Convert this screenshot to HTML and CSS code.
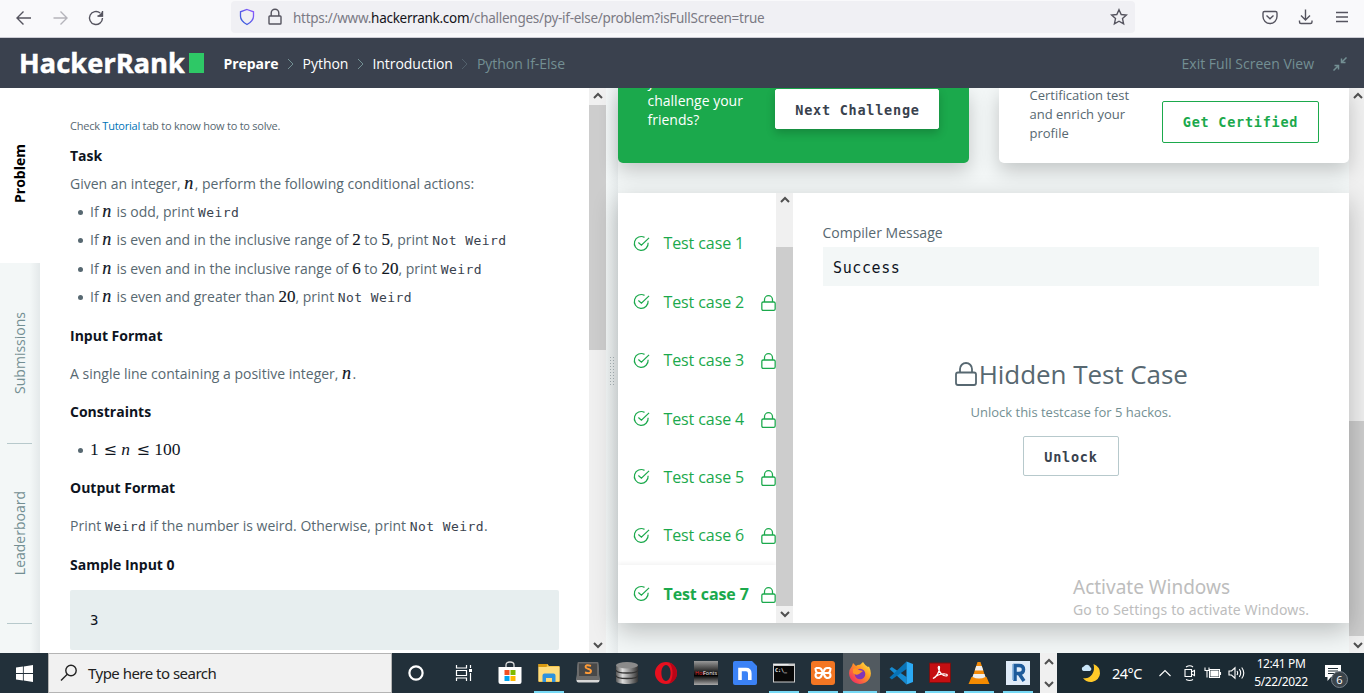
FILE: index.html
```html
<!DOCTYPE html>
<html lang="en">
<head>
<meta charset="utf-8">
<title>Python If-Else | HackerRank</title>
<link rel="stylesheet" href="styles.css">
</head>
<body>
<svg class="defs" aria-hidden="true">
  <symbol id="check" viewBox="0 0 18 18"><path d="M16 8.200A7.300 7.300 0 1 1 12.200 2.500M5.700 8l3.200 2.800L17 3" /></symbol>
  <symbol id="lock" viewBox="0 0 22 24"><path d="M3 10.500h16q2 0 2 2V21q0 2-2 2H3q-2 0-2-2v-8.500q0-2 2-2zM5 10.500V7a6 6 0 0 1 12 0v3.500"/></symbol>
  <symbol id="up" viewBox="0 0 10 8"><path d="M1 6l4-4 4 4"/></symbol>
  <symbol id="down" viewBox="0 0 10 8"><path d="M1 2l4 4 4-4"/></symbol>
  <symbol id="sep" viewBox="0 0 7 12"><path d="M1 1l5 5-5 5"/></symbol>
</svg>

<div class="toolbar">
  <svg class="nav" viewBox="0 0 120 36"><path d="M31 18H17.500M23.500 11.500L17 18l6.500 6.500"/><path class="dim" d="M53.500 18H67M60.500 11.500L67 18l-6.500 6.500"/><path d="M102.500 18a6.500 6.500 0 1 1-2.300-5M102.500 11v5h-5"/><path class="tip" d="M103 11v5.500h-5.500z"/></svg>
  <div class="urlbar">
    <svg class="shield" viewBox="0 0 16 18"><defs><linearGradient id="sg" x1="0" y1="1" x2="1" y2="0"><stop offset="0" stop-color="#2a5bd7"/><stop offset="1" stop-color="#9059ff"/></linearGradient></defs><path d="M8 1.500l6.500 2.300v4.400c0 3.700-3 6.300-6.500 8.300-3.500-2-6.500-4.600-6.500-8.300V3.800z" fill="none" stroke="url(#sg)" stroke-width="1.300"/></svg>
    <svg class="padlock" viewBox="0 0 14 18"><path d="M1.800 8h10.400q.8 0 .8.800v6.400q0 .8-.8.800H1.800q-.8 0-.8-.8V8.800Q1 8 1.800 8zM3.200 8V5a3.800 3.800 0 0 1 7.600 0v3"/></svg>
    <span class="url">https://www.<b>hackerrank.com</b>/challenges/py-if-else/problem?isFullScreen=true</span>
    <svg class="star" viewBox="0 0 18 18"><path d="M9 1.700l2.200 4.800 5.200.6-3.900 3.500 1.100 5.200L9 13.200l-4.600 2.600 1.100-5.200L1.600 7.100l5.200-.6z"/></svg>
  </div>
  <svg class="tools" viewBox="0 0 100 36"><path d="M13.500 11.500h11q1.500 0 1.500 1.500v3.500a7 7 0 0 1-14 0V13q0-1.500 1.500-1.500zM15.500 15.500l3.500 3.200 3.500-3.200M54.500 9.500v10.500M50 15.500l4.500 4.500 4.500-4.500M48.500 20.500v1.500q0 1.500 1.500 1.500h9.500q1.500 0 1.500-1.500v-1.500M85 12.500h12M85 17h12M85 21.500h12"/></svg>
</div>

<header class="header">
  <div class="logo"><span class="wordmark">HackerRank</span><i class="block"></i></div>
  <nav class="crumbs"><b>Prepare</b><svg><use href="#sep"/></svg><span>Python</span><svg><use href="#sep"/></svg><span>Introduction</span><svg><use href="#sep"/></svg><span class="here">Python If-Else</span></nav>
  <div class="exit"><span>Exit Full Screen View</span><svg viewBox="0 0 14 14"><path d="M13.500.5L8.500 5.500M8.500 1.500v4h4M.5 13.500l5-5M1.500 8.500h4v4"/></svg></div>
</header>

<main class="main">
  <aside class="tabs">
    <div class="tab active"><span>Problem</span></div>
    <div class="tab"><span>Submissions</span></div>
    <div class="tab"><span>Leaderboard</span></div>
  </aside>
  <section class="problem">
    <p class="hint">Check <a>Tutorial</a> tab to know how to to solve.</p>
    <h4 class="task">Task</h4>
    <p>Given an integer, <i class="v">n</i>, perform the following conditional actions:</p>
    <ul>
      <li>If <i class="v">n</i> is odd, print <code>Weird</code></li>
      <li>If <i class="v">n</i> is even and in the inclusive range of <em>2</em> to <em>5</em>, print <code>Not Weird</code></li>
      <li>If <i class="v">n</i> is even and in the inclusive range of <em>6</em> to <em>20</em>, print <code>Weird</code></li>
      <li>If <i class="v">n</i> is even and greater than <em>20</em>, print <code>Not Weird</code></li>
    </ul>
    <h4>Input Format</h4>
    <p>A single line containing a positive integer, <i class="v">n</i>.</p>
    <h4>Constraints</h4>
    <ul class="single"><li><span class="formula">1 <u>≤</u> <i>n</i> <u>≤</u> 100</span></li></ul>
    <h4>Output Format</h4>
    <p>Print <code>Weird</code> if the number is weird. Otherwise, print <code>Not Weird</code>.</p>
    <h4 class="sample">Sample Input 0</h4>
    <pre>3</pre>
  </section>
  <div class="scroll s-left"><svg><use href="#up"/></svg><i></i><svg><use href="#down"/></svg></div>
  <div class="splitter"><i></i></div>
  <section class="results">
    <div class="cards">
      <div class="card green"><p>you like to<br>challenge your<br>friends?</p><button>Next Challenge</button></div>
      <div class="card cert"><p>Certification test<br>and enrich your<br>profile</p><button>Get Certified</button></div>
    </div>
    <div class="panel">
      <div class="cases">
        <div class="case"><svg><use href="#check"/></svg><span>Test case 1</span></div>
        <div class="case"><svg><use href="#check"/></svg><span>Test case 2</span><svg class="lk"><use href="#lock"/></svg></div>
        <div class="case"><svg><use href="#check"/></svg><span>Test case 3</span><svg class="lk"><use href="#lock"/></svg></div>
        <div class="case"><svg><use href="#check"/></svg><span>Test case 4</span><svg class="lk"><use href="#lock"/></svg></div>
        <div class="case"><svg><use href="#check"/></svg><span>Test case 5</span><svg class="lk"><use href="#lock"/></svg></div>
        <div class="case"><svg><use href="#check"/></svg><span>Test case 6</span><svg class="lk"><use href="#lock"/></svg></div>
        <div class="case on"><svg><use href="#check"/></svg><span>Test case 7</span><svg class="lk"><use href="#lock"/></svg></div>
      </div>
      <div class="scroll s-mid"><svg><use href="#up"/></svg><i></i><svg><use href="#down"/></svg></div>
      <div class="detail">
        <label>Compiler Message</label>
        <div class="msg">Success</div>
        <h2><svg><use href="#lock"/></svg>Hidden Test Case</h2>
        <p class="sub">Unlock this testcase for 5 hackos.</p>
        <button>Unlock</button>
      </div>
    </div>
    <div class="watermark"><div class="w1">Activate Windows</div><div class="w2">Go to Settings to activate Windows.</div></div>
  </section>
  <div class="scroll s-right"><svg><use href="#up"/></svg><i></i><svg><use href="#down"/></svg></div>
</main>

<footer class="taskbar">
  <div class="start"><svg viewBox="0 0 16 16"><path fill="#fff" d="M0 2.300L6.500 1.400V7.600H0zM7.300 1.300L16 0V7.600H7.300zM0 8.400H6.500V14.600L0 13.700zM7.300 8.400H16V16L7.300 14.700z"/></svg></div>
  <div class="search"><svg viewBox="0 0 18 18"><circle cx="11" cy="6.500" r="5.200"/><path d="M7.300 10.300L1 16.600"/></svg><span>Type here to search</span></div>
  <div class="sys"><svg viewBox="0 0 24 24"><circle cx="12" cy="12" r="6.600" fill="none" stroke="#fff" stroke-width="2.200"/></svg></div>
  <div class="sys"><svg viewBox="0 0 24 24" fill="none" stroke="#fff" stroke-width="1.200"><path d="M4.500 4v3h10V4M4.500 20v-3h10v3M4.500 9.500h10v5h-10zM18.500 4v3M18.500 12v8"/><path d="M17 8h3v3h-3z" fill="#fff" stroke="none"/></svg></div>
  <div class="apps">
    <div class="app"><svg viewBox="0 0 24 24"><path d="M8 7V4q0-3 4-3t4 3v3" fill="none" stroke="#ddd" stroke-width="1.300"/><path d="M.5 6h23v15q0 2-2 2h-19q-2 0-2-2z" fill="#fff"/><path fill="#f25022" d="M6.500 9h5v5h-5z"/><path fill="#7fba00" d="M12.500 9h5v5h-5z"/><path fill="#00a4ef" d="M6.500 15h5v5h-5z"/><path fill="#ffb900" d="M12.500 15h5v5h-5z"/></svg></div>
    <div class="app run"><svg viewBox="0 0 24 24"><path d="M1.500 3h9l1.500 2h10.500v16h-21z" fill="#f7c64a"/><path d="M1.500 3h9l-1 3h-8z" fill="#d99a12"/><path d="M1.500 6h21v14h-21z" fill="#ffdc7c"/><path d="M5.500 21v-6.500q0-2 2-2h9q2 0 2 2V21h-3.500v-4H9v4z" fill="#2f92dd"/></svg></div>
    <div class="app"><svg viewBox="0 0 24 24"><path d="M2 2h20l1.500 17.500q0 2-2 2h-19q-2 0-2-2z" fill="#d8d8d8"/><path d="M2.500 1h19q1 0 1 1l1 17H.5l1-17q0-1 1-1z" fill="#6b6b6b"/><path d="M3 2.500h18v12.500H3z" fill="#484848"/><path d="M15 4.800Q9.500 3.200 9.500 6c0 2.200 5.500 1.500 5.500 4 0 2.600-3 2.400-6 1.500" fill="none" stroke="#ff9b37" stroke-width="1.900"/></svg></div>
    <div class="app"><svg viewBox="0 0 24 24"><defs><linearGradient id="db"><stop offset="0" stop-color="#555"/><stop offset=".3" stop-color="#ddd"/><stop offset="1" stop-color="#333"/></linearGradient></defs><path d="M1 4v16c0 4 22 4 22 0V4z" fill="url(#db)"/><ellipse cx="12" cy="4.200" rx="11" ry="3.200" fill="#8b8b8b"/><path d="M1 9c0 4 22 4 22 0M1 14.500c0 4 22 4 22 0" fill="none" stroke="#333" stroke-width="1.300"/></svg></div>
    <div class="app"><svg viewBox="0 0 24 24"><path fill-rule="evenodd" fill="#e8101f" d="M12 1a11 11 0 1 0 0 22 11 11 0 0 0 0-22zm0 3c2.800 0 4.600 3.800 4.600 8s-1.800 8-4.600 8-4.600-3.800-4.600-8S9.200 4 12 4z"/><path d="M15 1.500q8 2.500 8 10.500t-8 10.500q3.500-4 3.500-10.500T15 1.500z" fill="#a70014" opacity=".7"/></svg></div>
    <div class="app"><svg viewBox="0 0 24 24"><defs><linearGradient id="hf" x2="0" y2="1"><stop offset="0" stop-color="#999"/><stop offset=".45" stop-color="#222"/><stop offset=".6" stop-color="#000"/><stop offset="1" stop-color="#aaa"/></linearGradient></defs><path fill="url(#hf)" d="M0 0h24v24H0z"/><text x="1" y="14" class="hot">Hot</text><text x="9" y="14" class="hot fonts">Fonts</text></svg></div>
    <div class="app"><svg viewBox="0 0 24 24"><path fill="#3b82f6" d="M2 0h17l5 5v17q0 2-2 2H2q-2 0-2-2V2q0-2 2-2z"/><path d="M7 19V8.500h6q3.800 0 3.800 4v6.500" fill="none" stroke="#fff" stroke-width="3.600"/></svg></div>
    <div class="app run"><svg viewBox="0 0 24 24"><path fill="#ccc" d="M1 2.500h22v19H1z"/><path fill="#080808" d="M2 5h20v15.500H2z"/><path d="M1.500 3.500h15" stroke="#eee"/><text x="3" y="11" class="cmd">C:\_</text></svg></div>
    <div class="app run"><svg viewBox="0 0 24 24"><rect width="24" height="24" rx="3" fill="#f37623"/><path d="M4.500 7h3.500q2 0 3 2.500l2.500 5q1 2.500 3.200 2.500 2.800 0 2.800-2.700T16.700 12H7.300M19.500 7H16q-2 0-3 2.500l-2.500 5Q9.500 17 7.300 17q-2.800 0-2.800-2.700T7.300 12M4.500 7q0 5 2.800 5M19.500 7q0 5-2.800 5" fill="none" stroke="#fff" stroke-width="2.100"/></svg></div>
    <div class="app run fx"><svg viewBox="0 0 24 24"><defs><linearGradient id="ff" x1="1" y1="0" x2="0" y2="1"><stop offset="0" stop-color="#fff44f"/><stop offset=".4" stop-color="#ff9a22"/><stop offset="1" stop-color="#f0136f"/></linearGradient></defs><path d="M4 5l1-3 3 3q2-1.500 4-1.200L15 1q2 3.500 5 5l1-.5q3.500 7 .5 12a11 11 0 0 1-19 0Q-1 11 4 5z" fill="url(#ff)"/><circle cx="12" cy="13" r="5.300" fill="#8236b8"/><path d="M5 8q3-2 6 1l4 1-4 3q-3 2-6-1z" fill="#ff9622"/></svg></div>
    <div class="app run"><svg viewBox="0 0 24 24"><path fill="#168bd2" d="M2.800 6L.5 8 17.500 23.500V16z"/><path fill="#0873b7" d="M17.500.5v7.500L2.800 18.500.5 16.500z"/><path fill="#2baaf5" d="M17.500.5L24 3v18l-6.500 2.500z"/></svg></div>
    <div class="app run"><svg viewBox="0 0 24 24"><path fill="#c50f12" stroke="#711" d="M1.500 2h21v19.500h-21z"/><path d="M5 17.500c3-1 7-7 6.500-11 0-2-2-1-1 1.500 1 4 4.500 7 7.500 7 2 0 1.500-2-.5-2-4-.5-9 1.500-12.500 4.500z" fill="none" stroke="#fff" stroke-width="1.200"/></svg></div>
    <div class="app run"><svg viewBox="0 0 24 24"><path d="M4.500 16h15l3 7h-21z" fill="#f48b00"/><path d="M10.500 1h3L19 18q-7 4-14 0z" fill="#f38a08"/><path d="M9.200 5h5.600l1.500 4.500H7.700zM6.500 13h11l1 3q-6.500 3-13 0z" fill="#eee"/></svg></div>
    <div class="app run"><svg viewBox="0 0 24 24"><path fill="#e0ebf8" d="M0 0h24v24H0z"/><path d="M9 20V4.500h4q4.500 0 4.500 4t-4.500 4H9m4 0l5 7.500" fill="none" stroke="#1d5a9b" stroke-width="3.500"/><path d="M7 3v16" stroke="#78a9d8" stroke-width="1.500"/></svg></div>
  </div>
  <div class="updown"><svg><use href="#up"/></svg><svg><use href="#down"/></svg></div>
  <div class="tray">
    <svg class="moon" viewBox="0 0 22 20"><path d="M12.500 1q7 3 6.500 9.500T11 19q-6 .5-9-4 6 1 9-3.500T12.500 1z" fill="#ffc928"/><path d="M2.500 8a2.300 2.300 0 0 1 .3-4.500 3.500 3.500 0 0 1 6.400.8A2 2 0 0 1 9 8z" fill="#c9e5f9"/></svg>
    <span class="temp">24°C</span>
    <svg class="caret" viewBox="0 0 14 8"><path d="M1.500 7L7 1.500 12.500 7"/></svg>
    <svg class="meet" viewBox="0 0 14 18"><path d="M2 5.500h6.500v7H2zM8.500 8l3-1.500v5l-3-1.500M3 3q4-2.500 7 0M3 15.500q4 2 7 0"/></svg>
    <svg class="batt" viewBox="0 0 18 14"><path d="M5.500 3.500h10v8h-10zM16.500 6v3M1 1.500v3h4v-3M3 4.500v7"/><path fill="#fff" d="M7 5h7v5H7z"/></svg>
    <svg class="vol" viewBox="0 0 18 14"><path d="M1 5h2.500L7 1.800v10.400L3.500 9H1zM9 5q1.300 2 0 4M11.300 3.200q2.800 3.800 0 7.600M13.700 1.500q4.200 5.500 0 11"/></svg>
    <div class="clock"><div>12:41 PM</div><div>5/22/2022</div></div>
    <div class="note"><svg viewBox="0 0 18 18"><path fill="#fff" d="M1 1h16v12H7l-3.500 4v-4H1z"/><path stroke="#1b2a33" d="M4 4.500h10M4 7h10M4 9.500h6"/></svg><span class="badge">6</span></div>
  </div>
</footer>
</body>
</html>
```

FILE: styles.css
```css
* { box-sizing: border-box; }
body { margin: 0; width: 1364px; height: 693px; overflow: hidden; display: flex; flex-direction: column; font: 14px "Open Sans", sans-serif; color: #576871; background: #fff; }
svg { display: block; flex: none; }
p, h2, h4, ul, pre { margin: 0; }
.defs { position: absolute; width: 0; height: 0; }

/* browser toolbar */
.toolbar { height: 38px; flex: none; display: flex; background: #f9f9fb; border-bottom: 1px solid #ccccd4; }
.toolbar svg { fill: none; stroke: #55545f; stroke-width: 1.400; }
.nav { width: 120px; height: 36px; margin-right: 111px; }
.nav .dim { stroke: #b5b4bb; }
.nav .tip { fill: #55545f; stroke: none; }
.urlbar { width: 904px; height: 32px; margin-top: 1px; border-radius: 4px; background: #f0f0f4; display: flex; align-items: center; padding: 0 7px 0 8px; }
.shield { width: 16px; height: 18px; margin-right: 13px; }
.padlock { width: 14px; height: 18px; margin-right: 11px; }
.url { flex: 1; white-space: nowrap; font: 13.500px "Noto Sans", sans-serif; letter-spacing: -.28px; color: #7b7a84; padding-top: 1px; }
.url b { font-weight: 400; color: #15141a; }
.star { width: 18px; height: 18px; }
.tools { width: 100px; height: 36px; margin-left: 116px; }

/* site header */
.header { height: 50px; flex: none; background: #3a414e; display: flex; align-items: center; color: #fff; }
.logo { width: 185px; margin-left: 19px; display: flex; align-items: center; }
.wordmark { width: 170px; font: 700 27px/30px "Noto Sans", sans-serif; white-space: nowrap; letter-spacing: .2px; -webkit-text-stroke: .5px #fff; }
.block { width: 15px; height: 20px; background: #2ec866; }
.crumbs { display: flex; align-items: center; margin-left: 19.500px; padding-top: 1px; white-space: nowrap; letter-spacing: -.04px; }
.crumbs svg { width: 7px; height: 12px; fill: none; stroke: #738f93; margin: 0 8.500px; }
.here, .exit { color: #738f93; }
.crumbs svg:last-of-type { stroke: #52606b; }
.exit { margin-left: auto; display: flex; align-items: center; padding: 1px 17px 0 0; }
.exit svg { width: 14px; height: 14px; margin-left: 19px; fill: none; stroke: #738f93; stroke-width: 1.500; }

/* workspace */
.main { height: 565px; flex: none; display: flex; overflow: hidden; }
.tabs { width: 40px; display: flex; flex-direction: column; background: linear-gradient(90deg, #f3f7f7 75%, #e4e9ea); color: #738f93; }
.tab { height: 180px; flex: none; display: flex; align-items: center; justify-content: center; padding: 0 2px 2px 0; background: linear-gradient(#b7c9cc, #b7c9cc) 7px 100% / 25px 1px no-repeat; }
.tab.active { height: 175px; background: #fff; font-weight: 700; padding-bottom: 5px; }
.tab:nth-child(2) { height: 181px; }
.tab span { writing-mode: vertical-rl; transform: rotate(180deg); }
.tab.active span { color: #000; }
.problem { width: 549px; padding: 28px 30px 0; white-space: nowrap; overflow: hidden; }
.hint { font-size: 11px; line-height: 20px; letter-spacing: -.24px; }
.hint a { color: #0073b7; }
.problem h4, .problem > p:not(.hint) { font-size: 14px; line-height: 28px; height: 28px; }
.problem h4 { color: #0e141e; font-weight: 700; margin: 10px 0; }
.problem .task { margin: 6px 0 0; }
.problem ul { list-style: none; padding: 0 0 0 8px; }
.problem li { display: flex; align-items: baseline; height: 28.330px; line-height: 28px; white-space: pre; }
.problem li::before { content: ""; width: 5px; height: 5px; border-radius: 50%; background: #576871; margin-right: 7px; position: relative; top: -2px; }
.problem .single li { height: 28px; }
.problem ul + h4 { margin-top: 11px; }
.problem .single + h4 { margin-top: 10px; }
.problem .sample { margin: 11px 0; }
.v, em, .formula { font-family: "Liberation Serif", serif; color: #0e141e; font-size: 17px; line-height: 1; }
.v { display: inline-block; width: 10.500px; font-size: 18px; -webkit-text-stroke: .15px; }
em { font-style: normal; -webkit-text-stroke: .15px; }
.problem .formula { font-size: 17.500px; line-height: 26px; word-spacing: .4px; }
.formula i { display: inline-block; width: 10.500px; }
.formula u { display: inline-block; width: 13px; text-decoration: none; font-family: "DejaVu Serif", serif; font-size: 16px; }
code { font: 13px "DejaVu Sans Mono", monospace; letter-spacing: .43px; color: #39424e; }
pre { height: 60px; padding: 20px; background: #e7eeef; border-radius: 2px; font: 14px/21px "DejaVu Sans Mono", monospace; color: #0e141e; }

/* scrollbars */
.scroll { width: 17px; background: #f0f0f0; display: flex; flex-direction: column; flex: none; }
.scroll svg, .updown svg { width: 10px; height: 8px; fill: none; stroke: #505050; stroke-width: 2; margin: 4px auto 5px 3.500px; }
.scroll i { background: #cdcdcd; }
.scroll svg:last-child { margin: auto auto 4px 3.500px; }
.s-left i { height: 245px; }
.s-mid i { height: 359px; margin-top: 38px; }
.s-mid svg { margin-top: 3px; }
.s-mid svg:last-child { margin-bottom: 5px; }
.s-right { width: 15px; }
.s-right i { height: 215px; margin-top: 316px; }
.splitter { width: 12px; background: linear-gradient(90deg, #f3f7f7, #e6ebec); padding: 268px 0 0 3px; flex: none; }
.splitter i { display: block; width: 6px; height: 30px; background: radial-gradient(circle, #aab4b8 .7px, transparent 1px) 0 0 / 3px 3px; }

/* results */
.results { width: 731px; position: relative; background: #f3f7f7; }
.cards { display: flex; gap: 30px; height: 75px; }
.card { width: 350px; height: 75px; flex: none; display: flex; justify-content: space-between; border-radius: 0 0 5px 5px; padding: 0 30px 0 29.500px; box-shadow: 0 8px 20px rgba(0,0,0,.2); font-size: 14px; line-height: 19px; white-space: nowrap; }
.card.green { width: 351px; background: #1ba94c; color: #fff; }
.green p { margin-top: -16px; }
.cert { background: #fff; font-size: 13px; padding-left: 30.500px; }
.cert p { margin-top: -2px; }
button { font: 700 13.500px "DejaVu Sans Mono", monospace; letter-spacing: .75px; border: 1px solid #b7c9cc; border-radius: 2px; background: #fff; color: #39424e; padding: 1px 0 0; white-space: nowrap; }
.green button { width: 164px; height: 40px; margin-top: 1px; padding-left: 1px; border-color: #fff; box-shadow: 0 4px 10px rgba(0,0,0,.2); }
.cert button { width: 157px; height: 42px; margin-top: 13px; padding-top: 0; color: #1ba94c; border-color: #1ba94c; }
.panel { height: 430px; margin-top: 30px; background: #fff; display: flex; box-shadow: 0 8px 24px rgba(0,0,0,.24); }
.cases { width: 158px; padding-top: 21px; overflow: hidden; }
.case { height: 58.450px; display: flex; align-items: center; padding-left: 15px; color: #1ba94c; font-size: 16px; white-space: nowrap; letter-spacing: -.1px; }
.case svg { width: 17px; height: 17px; fill: none; stroke: #1ba94c; stroke-width: 1.300; }
.case span { width: 99px; margin-left: 13.500px; }
.case .lk { width: 15px; height: 16px; margin: 2px 0 0 1.500px; stroke-width: 1.900; }
.case.on { font-weight: 700; box-shadow: 0 -2px 4px rgba(0,0,0,.05); }
.detail { flex: 1; padding: 30px 30px 0; display: flex; flex-direction: column; align-items: center; }
.detail label { align-self: flex-start; line-height: 20px; margin-left: -.5px; }
.msg { align-self: stretch; height: 39px; margin-top: 4px; padding-left: 10px; background: #f3f7f7; color: #0e141e; font: 15px/42px "DejaVu Sans Mono", monospace; letter-spacing: .6px; }
.detail h2 { display: flex; align-items: center; height: 36px; margin-top: 70px; font-size: 26px; font-weight: 400; white-space: nowrap; letter-spacing: -.05px; }
.detail h2 svg { width: 22px; height: 24px; margin: 0 1.500px 0 1px; fill: none; stroke: #576871; stroke-width: 1.800; }
.sub { margin-top: 10px; line-height: 20px; font-size: 13px; color: #738f93; }
.detail button { width: 96px; height: 40px; margin-top: 14px; }
.watermark { position: absolute; left: 455px; top: 486px; color: #bdbdbd; font-family: "Noto Sans", sans-serif; white-space: nowrap; }
.w1 { font-size: 19px; line-height: 26px; }
.w2 { font-size: 14px; line-height: 20px; letter-spacing: .12px; }

/* taskbar */
.taskbar { height: 40px; flex: none; display: flex; background: #22303a; color: #fff; font-family: "Noto Sans", sans-serif; }
.start, .sys { width: 48px; display: flex; align-items: center; justify-content: center; }
.start svg { width: 17px; height: 17px; }
.search { width: 344px; display: flex; align-items: center; background: #f1f1f1; border: 1px solid #b4b4b4; color: #222; padding-left: 11px; font-size: 15px; letter-spacing: -.52px; white-space: nowrap; }
.search svg { width: 18px; height: 18px; fill: none; stroke: #222; stroke-width: 1.400; margin-right: 10px; }
.sys svg { width: 24px; height: 24px; }
.apps { width: 550px; display: flex; margin-left: 2.500px; margin-right: -.5px; }
.app { width: 39.100px; height: 40px; flex: none; display: flex; align-items: center; justify-content: center; }
.app svg { width: 24px; height: 24px; }
.run { background: linear-gradient(#76d9f5, #76d9f5) 50% 100% / 30px 2px no-repeat; }
.fx { background: linear-gradient(#76d9f5, #76d9f5) 1px 100% / 34px 2px no-repeat, linear-gradient(#525a60, #525a60) 1px 0 / 37px 40px no-repeat; padding-right: 3px; }
.hot { font: 5.500px "Open Sans", sans-serif; fill: #e02020; }
.fonts { fill: #eee; }
.cmd { font: 700 5px "DejaVu Sans Mono", monospace; fill: #fff; }
.updown { width: 17px; background: #f0f0f0; display: flex; flex-direction: column; justify-content: space-between; }
.updown svg { margin: 5px 3.500px; }
.tray { flex: 1; display: flex; align-items: center; padding-left: 24px; background: #1b2a33; }
.tray > svg { fill: none; stroke: #fff; stroke-width: 1.100; }
.tray .moon { width: 22px; height: 20px; stroke: none; }
.temp { width: 36px; margin-left: 9px; font-size: 14.500px; letter-spacing: -.5px; white-space: nowrap; }
.caret { width: 14px; height: 8px; margin-left: 10px; }
.meet { width: 14px; height: 18px; margin-left: 11px; }
.batt { width: 18px; height: 14px; margin-left: 7px; }
.vol { width: 18px; height: 14px; margin-left: 6px; }
.clock { width: 62px; margin-left: 4px; text-align: center; font-size: 12px; line-height: 18px; letter-spacing: -.4px; white-space: nowrap; }
.note { position: relative; width: 18px; height: 18px; margin-left: 12px; }
.badge { position: absolute; left: 7px; top: 7px; width: 17px; height: 17px; border-radius: 50%; background: #3b444b; border: 1px solid #76808a; font: 11px/15px "Open Sans", sans-serif; text-align: center; }
```
